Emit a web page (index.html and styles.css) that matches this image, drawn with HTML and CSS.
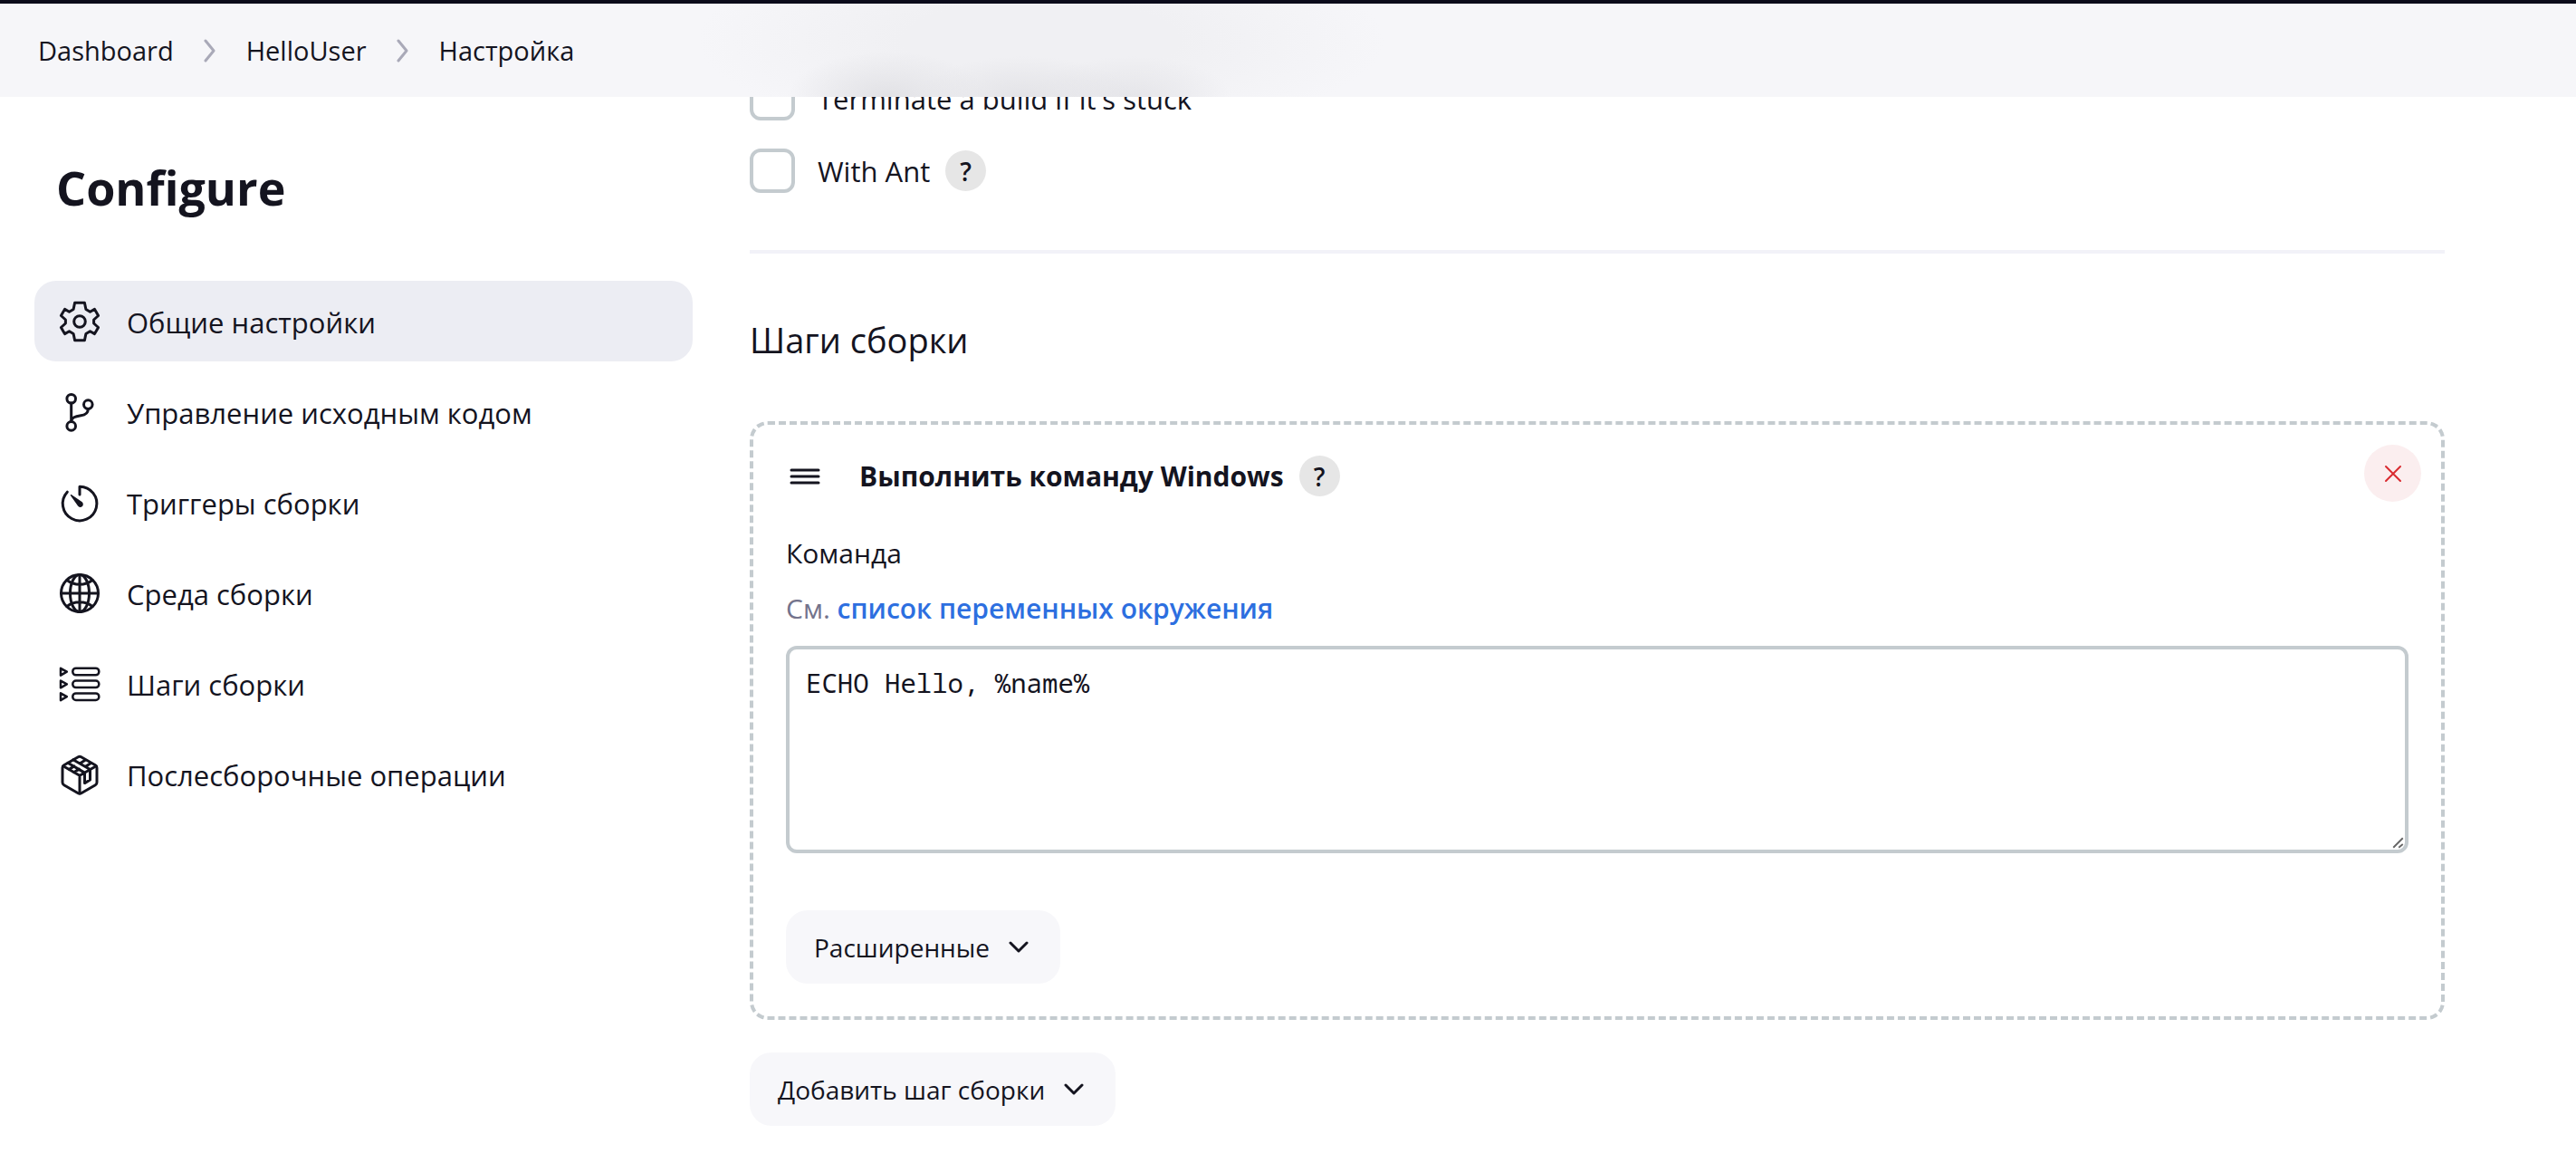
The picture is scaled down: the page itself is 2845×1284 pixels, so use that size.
FILE: index.html
```html
<!DOCTYPE html>
<html lang="ru">
<head>
<meta charset="utf-8">
<title>HelloUser Config</title>
<link rel="stylesheet" href="styles.css">
</head>
<body>
<header class="topbar">
  <nav class="breadcrumbs" aria-label="Breadcrumb">
    <a href="#dashboard">Dashboard</a>
    <svg class="crumb-sep" viewBox="0 0 14 26" aria-hidden="true"><path d="M2 2l9 11-9 11"/></svg>
    <a href="#job">HelloUser</a>
    <svg class="crumb-sep" viewBox="0 0 14 26" aria-hidden="true"><path d="M2 2l9 11-9 11"/></svg>
    <a href="#configure">Настройка</a>
  </nav>
</header>
<div class="page">
  <aside class="sidebar">
    <h1>Configure</h1>
    <nav class="tasks" aria-label="Configure">
      <a class="task active" href="#general">
        <svg class="icon" viewBox="0 0 48 48" aria-hidden="true"><path d="M18.6 3.2h10.8l1.5 7.3 4.6 2.7 5-2.8 4.1 7.1-5 4.5v4l5 4.5-4.1 7.1-5-2.8-4.6 2.7-1.5 7.3H18.6l-1.5-7.3-4.6-2.7-5 2.8-4.1-7.1 5-4.5v-4l-5-4.5 4.1-7.1 5 2.8 4.6-2.7z"/><circle cx="24" cy="24" r="6.3"/></svg>
        <span>Общие настройки</span></a>
      <a class="task" href="#scm">
        <svg class="icon" viewBox="0 0 48 48" aria-hidden="true"><circle cx="14.7" cy="9.3" r="4.8"/><circle cx="33.3" cy="15.6" r="4.8"/><circle cx="14.7" cy="39.4" r="4.8"/><path d="M14.7 14v20.6M33.3 20.4c0 4.2-3 6.6-8 7.4-6 1-10.6 2-10.6 6.800"/></svg>
        <span>Управление исходным кодом</span></a>
      <a class="task" href="#triggers">
        <svg class="icon" viewBox="0 0 48 48" aria-hidden="true"><path d="M24 15V6.2A18.8 18.8 0 1 1 10.3 12.200"/><path class="solid" d="M14 15.2c.3-.3.7-.3 1.1 0l11.300 7.900a3.200 3.200 0 1 1-4.400 4.500L14 16.300c-.3-.4-.3-.8 0-1.100z"/></svg>
        <span>Триггеры сборки</span></a>
      <a class="task" href="#environment">
        <svg class="icon" viewBox="0 0 48 48" aria-hidden="true"><circle cx="24" cy="24" r="20.5"/><ellipse cx="24" cy="24" rx="10.5" ry="20.5"/><path d="M24 3.500v41M3.500 24h41M10 9.500c8 6.300 20 6.300 28 0M10 38.500c8-6.300 20-6.300 28 0"/></svg>
        <span>Среда сборки</span></a>
      <a class="task" href="#steps">
        <svg class="icon thin" viewBox="0 0 48 48" aria-hidden="true"><path d="M3 6.800l6.800 3.900L3 14.600zM3 20.500l6.800 3.900L3 28.300zM3 34.300l6.800 3.900L3 42.100z"/><rect x="16.3" y="6.7" width="29" height="7.6" rx="3.6"/><rect x="16.3" y="20.5" width="29" height="7.6" rx="3.6"/><rect x="16.3" y="34.4" width="29" height="7.6" rx="3.6"/></svg>
        <span>Шаги сборки</span></a>
      <a class="task" href="#post-build">
        <svg class="icon" viewBox="0 0 48 48" aria-hidden="true"><path d="M22.300 4.700a3.400 3.400 0 0 1 3.400 0l15.600 9a3.400 3.400 0 0 1 1.700 3v16a3.400 3.400 0 0 1-1.700 3l-15.600 9a3.400 3.400 0 0 1-3.400 0l-15.600-9a3.400 3.400 0 0 1-1.700-3v-16a3.400 3.400 0 0 1 1.700-3z"/><path d="M5.800 14.700L24 25.300l18.200-10.600M24 25.300v19.500M11 11.300l18.500 10.800v11.500l6-3.600V18.500L16.800 7.800M12 18.500l6-3.600M17.500 21.700l6-3.600M24.500 11.800l5.500-3.600M30.500 15.300l5.500-3.600"/></svg>
        <span>Послесборочные операции</span></a>
    </nav>
  </aside>
  <main class="content">
    <div class="check-row">
      <input type="checkbox" id="stuck"><label for="stuck">Terminate a build if it's stuck</label>
    </div>
    <div class="check-row">
      <input type="checkbox" id="ant"><label for="ant">With Ant</label>
      <button type="button" class="help" aria-label="Help: With Ant">?</button>
    </div>
    <hr>
    <h2>Шаги сборки</h2>
    <section class="step">
      <div class="step-head">
        <svg class="handle" viewBox="0 0 34 18" aria-hidden="true"><path d="M2 2h30M2 9h30M2 16h30"/></svg>
        <h3>Выполнить команду Windows</h3>
        <button type="button" class="help" aria-label="Help: Windows">?</button>
        <button type="button" class="remove" aria-label="Delete"><svg viewBox="0 0 20 20" aria-hidden="true"><path d="M2 2l16 16M18 2L2 18"/></svg></button>
      </div>
      <label class="field-label" for="command">Команда</label>
      <p class="hint">См. <a href="#env-vars">список переменных окружения</a></p>
      <textarea id="command" spellcheck="false">ECHO Hello, %name%</textarea>
      <button type="button" class="btn">Расширенные <svg viewBox="0 0 24 14" aria-hidden="true"><path d="M3 2l9 9 9-9"/></svg></button>
    </section>
    <button type="button" class="btn">Добавить шаг сборки <svg viewBox="0 0 24 14" aria-hidden="true"><path d="M3 2l9 9 9-9"/></svg></button>
  </main>
</div>
</body>
</html>
```
FILE: styles.css
```css
* { box-sizing: border-box; }

body {
  margin: 0;
  background: #fff;
  color: #14141f;
  font: 500 30px/40px "Open Sans", "Noto Sans", sans-serif;
}

a { color: inherit; text-decoration: none; }
svg { fill: none; stroke: currentColor; stroke-linecap: round; stroke-linejoin: round; flex: none; }
button { font: inherit; color: inherit; border: 0; padding: 0; cursor: pointer; }

.topbar {
  position: sticky;
  top: 0;
  z-index: 1;
  height: 107px;
  border-top: 4px solid #0b0b1a;
  padding: 0 42px;
  background:
    radial-gradient(110px 50px at 980px 103px, #e1e1e5 0%, #e1e1e500 100%),
    radial-gradient(120px 45px at 1130px 103px, #e3e3e7 0%, #e3e3e700 100%),
    radial-gradient(110px 45px at 1250px 103px, #e5e5e9 0%, #e5e5e900 100%),
    radial-gradient(380px 110px at 1150px 40px, #f0f0f3 40%, #f0f0f300 100%),
    #f6f6f9;
}
.breadcrumbs { display: flex; align-items: center; height: 100%; gap: 33px; font-size: 29px; }
.crumb-sep { width: 14px; height: 26px; color: #a9a9b8; stroke-width: 3; }

.page { display: flex; gap: 63px; padding: 0 145px 0 38px; }

.sidebar { flex: 0 0 727px; padding-top: 64px; }
h1 { margin: 0 0 67px; padding-left: 24px; font-size: 52px; line-height: 72px; font-weight: 700; }
.tasks { display: flex; flex-direction: column; gap: 11px; }
.task { display: flex; align-items: center; gap: 28px; height: 89px; padding: 0 26px; border-radius: 24px; font-size: 31px; }
.task span { padding-top: 3px; }
.task.active { background: #ecedf3; }
.icon { width: 48px; height: 48px; stroke-width: 3; }
.icon.thin { stroke-width: 2.5; }
.icon .solid { fill: currentColor; stroke: none; }

.content { flex: 1; min-width: 0; margin-top: -23px; }
.check-row { display: flex; align-items: center; height: 49px; margin-bottom: 31px; font-size: 31px; }
.check-row input {
  appearance: none;
  width: 50px;
  height: 49px;
  margin: 0 25px 0 0;
  border: 4px solid #c4cbcf;
  border-radius: 12px;
  background: #fff;
}
.help {
  width: 45px;
  height: 45px;
  margin-left: 17px;
  border-radius: 50%;
  background: #e6e6e6;
  font-size: 28px;
  font-weight: 600;
}
hr { height: 4px; margin: 63px 0 70px; border: 0; background: #f2f2f8; }
h2 { margin: 0 0 65px; font-size: 38px; line-height: 50px; font-weight: 500; }

.step { margin-bottom: 36px; padding: 22px 36px 36px; border: 4px dashed #c4cbcf; border-radius: 20px; }
.step-head { display: flex; align-items: center; height: 69px; margin-right: -14px; }
.handle { width: 34px; height: 18px; margin: 0 43px 0 4px; stroke-width: 3; }
h3 { margin: 0; font-size: 30px; font-weight: 700; }
.remove { display: grid; place-items: center; align-self: flex-start; width: 63px; height: 63px; margin-left: auto; border-radius: 50%; background: #fbeeef; color: #d92b30; }
.remove svg { width: 20px; height: 20px; stroke-width: 2; }
.field-label { display: block; margin-top: 31px; }
.hint { margin: 21px 0; color: #73738c; font-weight: 400; }
.hint a { color: #2d6fe0; font-weight: 600; }
textarea {
  display: block;
  width: 100%;
  height: 229px;
  margin-bottom: 63px;
  padding: 17px 18px;
  border: 4px solid #c4cbcf;
  border-radius: 12px;
  background: #fff;
  color: inherit;
  font: 29px/40px "Noto Sans Mono", "Liberation Mono", monospace;
}
textarea::-webkit-scrollbar { width: 20px; height: 20px; }
textarea::-webkit-resizer {
  background: url("data:image/svg+xml,%3Csvg xmlns='http://www.w3.org/2000/svg' viewBox='0 0 20 20'%3E%3Cpath d='M3 17L17 3M11 17l6-5' stroke='%23666' stroke-width='2.500'/%3E%3C/svg%3E") center / 100% no-repeat;
}
.btn {
  display: flex;
  align-items: center;
  gap: 20px;
  height: 81px;
  padding: 0 34px 0 31px;
  border-radius: 24px;
  background: #f7f7fa;
  font-size: 28px;
}
.btn svg { width: 24px; height: 14px; stroke-width: 3; }
```
